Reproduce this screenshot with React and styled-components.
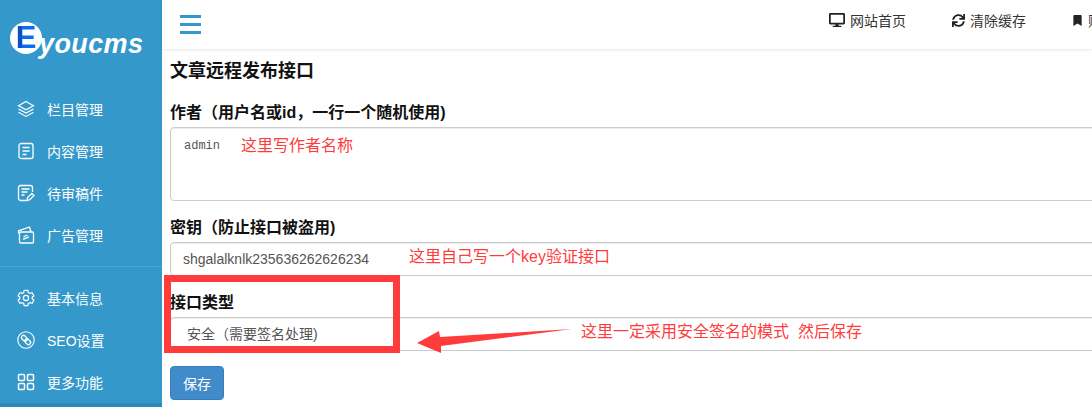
import React from 'react';
import styled, { createGlobalStyle } from 'styled-components';
import { FaDesktop, FaSync, FaBookmark } from 'react-icons/fa';

const cjk = '"Noto Sans CJK SC", "Liberation Sans", sans-serif';
const red = '#ff3b3b';

const GlobalStyle = createGlobalStyle`
  html, body {
    margin: 0;
    padding: 0;
    background: #fff;
    font-family: "Liberation Sans", ${cjk};
  }
  * { box-sizing: border-box; }
`;

const LayersIcon = () => (
  <svg width="18" height="18" viewBox="0 0 18 18" fill="none" stroke="#fff" strokeWidth="1.2">
    <path d="M9 1.5 16.5 5.7 9 9.8 1.5 5.7Z" />
    <path d="M1.5 9 9 13.1 16.5 9" />
    <path d="M1.5 12.2 9 16.4 16.5 12.2" />
  </svg>
);

const ContentIcon = () => (
  <svg width="18" height="18" viewBox="0 0 18 18" fill="none" stroke="#fff" strokeWidth="1.3">
    <rect x="2" y="1.5" width="14" height="15" rx="2" />
    <path d="M5.5 5.5h7M5.5 9h7M5.5 12.5h4" />
  </svg>
);

const DraftIcon = () => (
  <svg width="18" height="18" viewBox="0 0 18 18" fill="none" stroke="#fff" strokeWidth="1.3">
    <path d="M9 16.5H3.5a2 2 0 0 1-2-2v-11a2 2 0 0 1 2-2h10a2 2 0 0 1 2 2V8" />
    <path d="M4.5 5h8M4.5 8h6M4.5 11h3" />
    <path d="M10 16.5 10.6 13.5 14.8 9.3 17 11.5 12.8 15.7Z" />
  </svg>
);

const AdIcon = () => (
  <svg width="18" height="18" viewBox="0 0 18 18" fill="none" stroke="#fff" strokeWidth="1.3">
    <rect x="2.5" y="6" width="14" height="11" rx="1.2" />
    <path d="M1.5 7.5 1.6 4.8 12.5 1 14 6" />
    <path d="M6 13.4l6-2.6M6.5 10.8l4-1.8" />
  </svg>
);

const GearIcon = () => (
  <svg width="18" height="18" viewBox="0 0 18 18" fill="none" stroke="#fff" strokeWidth="1.2">
    <path d="M7.2 1.3h3.6l.5 2.2 1.6.9 2.2-.7 1.8 3.1-1.7 1.5v1.4l1.7 1.5-1.8 3.1-2.2-.7-1.6.9-.5 2.2H7.2l-.5-2.2-1.6-.9-2.2.7-1.8-3.1 1.7-1.5V8.3L1.1 6.8l1.8-3.1 2.2.7 1.6-.9Z" />
    <circle cx="9" cy="9" r="2.6" />
  </svg>
);

const LinkIcon = () => (
  <svg width="18" height="18" viewBox="0 0 18 18" fill="none" stroke="#fff" strokeWidth="1.1">
    <circle cx="9" cy="9" r="8.2" />
    <g transform="rotate(45 9 9)" strokeWidth="1.3">
      <rect x="3.4" y="6.9" width="6.4" height="4.2" rx="2.1" />
      <rect x="8.2" y="6.9" width="6.4" height="4.2" rx="2.1" />
    </g>
  </svg>
);

const GridIcon = () => (
  <svg width="18" height="18" viewBox="0 0 18 18" fill="none" stroke="#fff" strokeWidth="1.5">
    <rect x="1.5" y="1.5" width="6" height="6" rx="1" />
    <rect x="10.5" y="1.5" width="6" height="6" rx="1" />
    <rect x="1.5" y="10.5" width="6" height="6" rx="1" />
    <rect x="10.5" y="10.5" width="6" height="6" rx="1" />
  </svg>
);

const topItems = [
  { label: '栏目管理', Icon: LayersIcon },
  { label: '内容管理', Icon: ContentIcon },
  { label: '待审稿件', Icon: DraftIcon },
  { label: '广告管理', Icon: AdIcon },
];

const bottomItems = [
  { label: '基本信息', Icon: GearIcon },
  { label: 'SEO设置', Icon: LinkIcon },
  { label: '更多功能', Icon: GridIcon },
];

const App = () => {
  return (
    <Page>
      <GlobalStyle />
      <Sidebar>
        <Logo>
          <LogoBadge>
            <span>E</span>
          </LogoBadge>
          <LogoText>youcms</LogoText>
        </Logo>
        <NavGroup>
          {topItems.map(({ label, Icon }) => (
            <NavItem key={label}>
              <Icon />
              <span>{label}</span>
            </NavItem>
          ))}
        </NavGroup>
        <NavDivider />
        <NavGroup>
          {bottomItems.map(({ label, Icon }) => (
            <NavItem key={label}>
              <Icon />
              <span>{label}</span>
            </NavItem>
          ))}
        </NavGroup>
        <SidebarFoot />
      </Sidebar>

      <Main>
        <TopBar>
          <Burger>
            <i />
            <i />
            <i />
          </Burger>
          <TopLinks>
            <TopLink>
              <FaDesktop size={16} />
              网站首页
            </TopLink>
            <TopLink>
              <FaSync size={13} />
              清除缓存
            </TopLink>
            <TopLink>
              <FaBookmark size={11} />
              账号管理
            </TopLink>
          </TopLinks>
        </TopBar>

        <Form>
          <Title>文章远程发布接口</Title>

          <Field>
            <Label>作者（用户名或id，一行一个随机使用)</Label>
            <TextBox>admin</TextBox>
            <Note $left={71} $top={34}>这里写作者名称</Note>
          </Field>

          <Field $gap={14}>
            <Label>密钥（防止接口被盗用)</Label>
            <InputBox>shgalalknlk235636262626234</InputBox>
            <Note $left={239} $top={30}>这里自己写一个key验证接口</Note>
          </Field>

          <Field $gap={14}>
            <Label>接口类型</Label>
            <SelectBox>安全（需要签名处理)</SelectBox>
          </Field>

          <SaveButton>保存</SaveButton>
        </Form>

        <Highlight />
        <Arrow viewBox="0 0 160 30" width="160" height="30">
          <polygon points="2,18 24,6 25,12 157,4 26,21 26,28" fill={red} />
        </Arrow>
        <LongNote>这里一定采用安全签名的模式&nbsp;&nbsp;然后保存</LongNote>
      </Main>
    </Page>
  );
};

const Page = styled.div`
  display: flex;
  width: 1092px;
  height: 407px;
  overflow: hidden;
`;

const Sidebar = styled.aside`
  display: flex;
  flex-direction: column;
  flex: 0 0 162px;
  height: 407px;
  background: #3498cb;
  overflow: hidden;
`;

const Logo = styled.div`
  position: relative;
  display: flex;
  align-items: center;
  height: 88px;
  padding: 0 0 12px 39px;
`;

const LogoBadge = styled.span`
  position: absolute;
  left: 10px;
  top: 22px;
  width: 32px;
  height: 32px;
  border-radius: 50%;
  background: #fff;
  text-align: center;
  span {
    display: inline-block;
    font: 900 31px/32px "Liberation Sans", sans-serif;
    color: transparent;
    background: linear-gradient(90deg, #0a4fc4 0 32%, #0a6cf0 32% 100%);
    -webkit-background-clip: text;
    background-clip: text;
  }
`;

const LogoText = styled.span`
  color: #fff;
  font: italic bold 27px "Liberation Sans", sans-serif;
  letter-spacing: 0.4px;
  margin-top: 12px;
`;

const NavGroup = styled.nav`
  display: flex;
  flex-direction: column;
`;

const NavItem = styled.a`
  display: flex;
  align-items: center;
  gap: 12px;
  height: 42px;
  padding-left: 17px;
  color: #fff;
  font-size: 14px;
  font-family: "Liberation Sans", ${cjk};
`;

const NavDivider = styled.div`
  height: 1px;
  margin: 10px 0;
  background: #4aa5d4;
`;

const SidebarFoot = styled.div`
  flex: 1;
  background: #2a88bd;
`;

const Main = styled.main`
  position: relative;
  flex: 1;
  min-width: 0;
`;

const TopBar = styled.header`
  display: flex;
  align-items: center;
  justify-content: space-between;
  height: 49px;
  background: #fff;
  box-shadow: 0 1px 3px rgba(0, 0, 0, 0.1);
  padding-left: 18px;
`;

const Burger = styled.div`
  display: flex;
  flex-direction: column;
  gap: 5px;
  width: 21px;
  margin-top: -1px;
  i {
    display: block;
    height: 3px;
    background: #3498cb;
  }
`;

const TopLinks = styled.div`
  display: flex;
  gap: 46px;
  margin-right: -52px;
  margin-top: -9px;
  white-space: nowrap;
`;

const TopLink = styled.a`
  display: flex;
  align-items: center;
  gap: 5px;
  color: #333;
  font-size: 14px;
  svg { color: #222; }
`;

const Form = styled.form`
  padding: 9px 0 0 8px;
  width: 1000px;
`;

const Title = styled.h1`
  margin: 0 0 16px;
  height: 26px;
  color: #111;
  font-size: 18px;
  line-height: 26px;
  font-weight: 700;
`;

const Field = styled.div`
  position: relative;
  margin-top: ${(p) => p.$gap || 0}px;
`;

const Label = styled.label`
  display: block;
  height: 27px;
  color: #111;
  font-size: 16px;
  line-height: 26px;
  font-weight: 700;
`;

const TextBox = styled.div`
  height: 74px;
  padding: 10px 13px;
  border: 1px solid #ccc;
  border-radius: 4px;
  box-shadow: inset 0 1px 1px rgba(0, 0, 0, 0.075);
  color: #555;
  font: 12px/16px "Liberation Mono", monospace;
`;

const InputBox = styled.div`
  height: 34px;
  padding: 0 12px;
  border: 1px solid #ccc;
  border-radius: 4px;
  box-shadow: inset 0 1px 1px rgba(0, 0, 0, 0.075);
  color: #555;
  font-size: 14px;
  line-height: 32px;
`;

const SelectBox = styled(InputBox)`
  padding: 0 16px;
`;

const SaveButton = styled.button`
  display: block;
  width: 54px;
  height: 34px;
  margin-top: 15px;
  padding: 0;
  border: 1px solid #357ebd;
  border-radius: 4px;
  background: #428bca;
  color: #fff;
  font-size: 14px;
  font-family: inherit;
`;

const Note = styled.span`
  position: absolute;
  left: ${(p) => p.$left}px;
  top: ${(p) => p.$top}px;
  color: ${red};
  font-size: 16px;
  line-height: 24px;
  white-space: nowrap;
`;

const Highlight = styled.div`
  position: absolute;
  left: 2px;
  top: 275px;
  width: 236px;
  height: 78px;
  border: 7px solid ${red};
  pointer-events: none;
`;

const Arrow = styled.svg`
  position: absolute;
  left: 253px;
  top: 325px;
`;

const LongNote = styled.span`
  position: absolute;
  left: 419px;
  top: 320px;
  color: ${red};
  font-size: 16px;
  line-height: 24px;
  white-space: nowrap;
`;

export default App;
